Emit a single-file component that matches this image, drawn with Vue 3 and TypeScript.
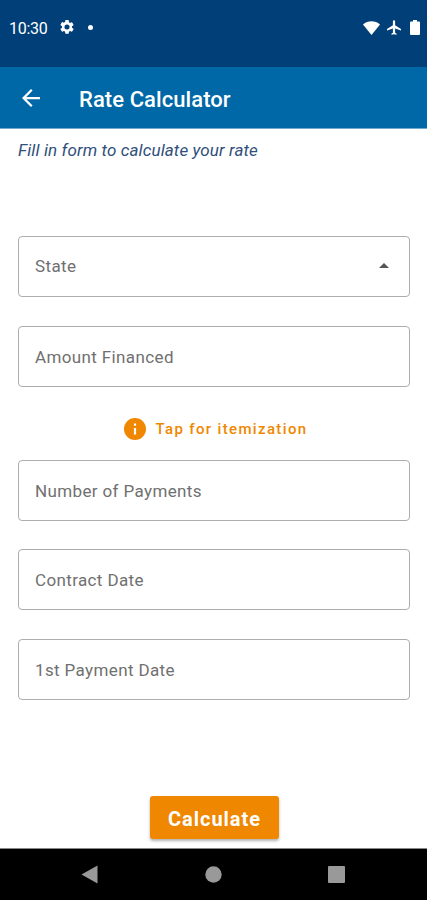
<script setup lang="ts">
import { ref } from 'vue'

interface Field {
  id: string
  label: string
  dropdown?: boolean
}

const loanFields: Field[] = [
  { id: 'state', label: 'State', dropdown: true },
  { id: 'amount', label: 'Amount Financed' },
]
const paymentFields: Field[] = [
  { id: 'payments', label: 'Number of Payments' },
  { id: 'contract', label: 'Contract Date' },
  { id: 'first', label: '1st Payment Date' },
]
const active = ref('')
</script>

<template>
  <div class="screen">
    <header class="status">
      <span class="time">10:30</span>
      <svg class="gear" viewBox="2 2 20 20"><path fill="#fff" d="M19.14 12.94c.04-.3.06-.61.06-.94s-.02-.64-.07-.94l2.03-1.58a.49.49 0 0 0 .12-.61l-1.92-3.32a.49.49 0 0 0-.59-.22l-2.39.96a7 7 0 0 0-1.62-.94l-.36-2.54A.48.48 0 0 0 13.92 2h-3.84a.47.47 0 0 0-.47.41l-.36 2.54c-.59.24-1.13.57-1.62.94l-2.39-.96a.48.48 0 0 0-.59.22L2.74 8.87a.47.47 0 0 0 .12.61l2.03 1.58a6 6 0 0 0 0 1.88l-2.03 1.58a.49.49 0 0 0-.12.61l1.92 3.32c.12.22.37.29.59.22l2.39-.96c.5.38 1.03.7 1.62.94l.36 2.54c.05.24.24.41.48.41h3.84c.24 0 .44-.17.47-.41l.36-2.54a7 7 0 0 0 1.62-.94l2.39.96c.22.08.47 0 .59-.22l1.92-3.32a.47.47 0 0 0-.12-.61zM12 15.6a3.6 3.6 0 1 1 0-7.2 3.6 3.6 0 0 1 0 7.2z"/></svg>
      <span class="dot"></span>
      <div class="indicators">
        <svg width="17" height="14" viewBox="0 0 17 14"><path fill="#fff" d="M8.500 14 0 3.400C4.800-.8 12.200-.8 17 3.400z"/></svg>
        <svg width="14" height="15" viewBox="2 2 19 20"><path fill="#fff" d="M21 16v-2l-8-5V3.500a1.500 1.500 0 0 0-3 0V9l-8 5v2l8-2.500V19l-2 1.500V22l3.500-1 3.500 1v-1.500L13 19v-5.500z"/></svg>
        <svg class="battery" width="10" height="15" viewBox="0 0 10 15"><path fill="#fff" d="M3 0h4v1.500h2q1 0 1 1V14q0 1-1 1H1q-1 0-1-1V2.500q0-1 1-1h2z"/></svg>
      </div>
    </header>

    <div class="appbar">
      <svg class="back" viewBox="4 4 16 16"><path fill="#fff" d="M20 11H7.830l5.590-5.590L12 4l-8 8 8 8 1.410-1.410L7.830 13H20z"/></svg>
      <h1>Rate Calculator</h1>
    </div>

    <main>
      <p class="hint">Fill in form to calculate your rate</p>
      <div class="group">
        <div v-for="f in loanFields" :key="f.id" class="field" :class="{ select: f.dropdown }" @click="active = f.id">
          <span>{{ f.label }}</span>
          <svg v-if="f.dropdown" class="caret" viewBox="0 0 10 5"><path fill="#555" d="M0 5 5 0l5 5z"/></svg>
        </div>
      </div>
      <div class="itemize">
        <svg viewBox="2 2 20 20"><path fill="#f08700" d="M12 2a10 10 0 1 0 0 20 10 10 0 0 0 0-20z"/><path fill="#fff" d="M11 11h2v6h-2zM11 7h2v2h-2z"/></svg>
        <span>Tap for itemization</span>
      </div>
      <div class="group">
        <div v-for="f in paymentFields" :key="f.id" class="field" @click="active = f.id">
          <span>{{ f.label }}</span>
        </div>
      </div>
      <button class="calculate">Calculate</button>
    </main>

    <nav>
      <svg width="17" height="19" viewBox="0 0 17 19"><path fill="#999" d="M16.500.5v18L.5 9.500z"/></svg>
      <svg width="17" height="17" viewBox="0 0 17 17"><circle cx="8.500" cy="8.500" r="8.200" fill="#999"/></svg>
      <svg width="17" height="17" viewBox="0 0 17 17"><rect width="17" height="17" rx="1" fill="#999"/></svg>
    </nav>
  </div>
</template>

<style>
body {
  background: #fff;
}
</style>

<style scoped>
.screen {
  width: 427px;
  height: 900px;
  display: flex;
  flex-direction: column;
  overflow: hidden;
  background: #fff;
  font-family: Roboto, sans-serif;
}
svg {
  display: block;
  flex: none;
}
.status {
  box-sizing: border-box;
  height: 67px;
  flex: none;
  display: flex;
  align-items: flex-start;
  padding: 20px 7px 0 9px;
  background: #003f77;
  color: #fff;
}
.time {
  width: 51px;
  font-size: 16px;
  line-height: 17px;
  letter-spacing: -0.3px;
}
.gear {
  width: 14px;
  height: 14px;
}
.dot {
  width: 5px;
  height: 5px;
  margin: 5px 0 0 14px;
  border-radius: 50%;
  background: #fff;
}
.indicators {
  display: flex;
  align-items: center;
  gap: 7px;
  margin-left: auto;
}
.battery {
  margin-left: 2px;
}
.appbar {
  height: 61px;
  flex: none;
  display: flex;
  align-items: center;
  border-bottom: 1px solid #6fa9cd;
  background: #0068a6;
  color: #fff;
}
.back {
  width: 18px;
  height: 18px;
  margin: 0 39px 0 22px;
}
h1 {
  margin: 4px 0 0;
  font-size: 22px;
  font-weight: 500;
  line-height: 26px;
  letter-spacing: 0.07px;
}
main {
  flex: 1;
  display: flex;
  flex-direction: column;
  padding: 11px 17px 0 18px;
}
.hint {
  height: 10px;
  margin: 0 0 86px;
  font-size: 17px;
  font-style: italic;
  line-height: 20px;
  letter-spacing: 0.12px;
  color: #304f7b;
}
.group {
  display: flex;
  flex-direction: column;
  gap: 28.500px;
}
.field {
  box-sizing: border-box;
  height: 61px;
  display: flex;
  align-items: center;
  justify-content: space-between;
  padding: 1px 20px 0 16px;
  border: 1.500px solid #adadad;
  border-radius: 4px;
  font-size: 17px;
  letter-spacing: 0.37px;
  color: #707070;
}
.field.select {
  padding-top: 0;
  padding-bottom: 2px;
}
.caret {
  width: 10px;
  height: 5px;
}
.itemize {
  box-sizing: border-box;
  height: 73px;
  display: flex;
  align-items: center;
  gap: 10px;
  padding: 12px 0 0 105.500px;
  font-size: 15px;
  font-weight: 500;
  letter-spacing: 1.350px;
  color: #f08700;
}
.itemize svg {
  width: 22px;
  height: 22px;
}
.calculate {
  width: 129px;
  height: 43px;
  margin: 96px 0 0 131.500px;
  padding: 3px 0 0 1px;
  border: 0;
  border-radius: 3px;
  background: #f08700;
  box-shadow: 0 2px 3px rgba(0, 0, 0, 0.3);
  color: #fff;
  font-family: inherit;
  font-size: 20px;
  font-weight: 700;
  letter-spacing: 0.950px;
}
nav {
  box-sizing: border-box;
  height: 52px;
  flex: none;
  display: flex;
  align-items: center;
  justify-content: space-between;
  padding: 0 82px 0 81px;
  border-top: 1px solid #888;
  background: #000;
}
</style>
